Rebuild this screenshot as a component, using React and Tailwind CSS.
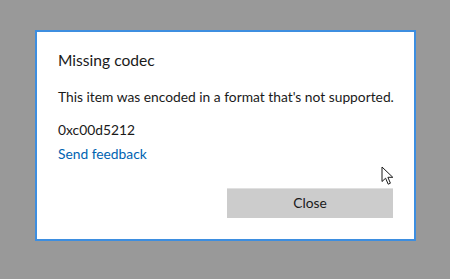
import React from 'react';

// Mouse pointer drawn over the dialog
const Pointer = () => (
    <svg width="14" height="20" viewBox="0 0 14 20" className="absolute left-[381px] top-[166px]">
        <path
            d="M1 1 L1 15.5 L4.6 12.2 L7.2 18.2 L9.4 17.2 L6.9 11.3 L11.8 11.3 Z"
            fill="#ffffff"
            stroke="#1a1a1a"
            strokeWidth="1"
            strokeLinejoin="round"
        />
    </svg>
);

export default function App() {
    return (
        <div
            className="relative w-[450px] h-[279px] bg-[#999999] pt-[30px] pl-[35px]"
            style={{ fontFamily: 'Lato, "Open Sans", Arial, sans-serif' }}
        >
            <div className="w-[381px] h-[211px] bg-white border-2 border-[#3d8ee0] flex flex-col pl-[21px] pr-[10px]">
                <h1 className="mt-[18px] text-[15.6px] leading-[20px] text-[#1a1a1a] whitespace-nowrap">Missing codec</h1>
                <p className="mt-[18px] text-[13.8px] leading-[18px] text-[#1a1a1a] whitespace-nowrap">
                    This item was encoded in a format that's not supported.
                </p>
                <p className="mt-[15px] text-[13.8px] leading-[18px] text-[#1a1a1a]">0xc00d5212</p>
                <a className="mt-[6px] text-[13.8px] leading-[18px] text-[#0063b1] whitespace-nowrap">Send feedback</a>
                <div className="flex justify-end mt-auto mb-[21px] pr-[11px]">
                    <button className="w-[166px] h-[30px] bg-[#cccccc] border-t border-[#e0e0e0] text-[13.8px] text-[#1a1a1a]">
                        Close
                    </button>
                </div>
            </div>
            <Pointer />
        </div>
    );
}
